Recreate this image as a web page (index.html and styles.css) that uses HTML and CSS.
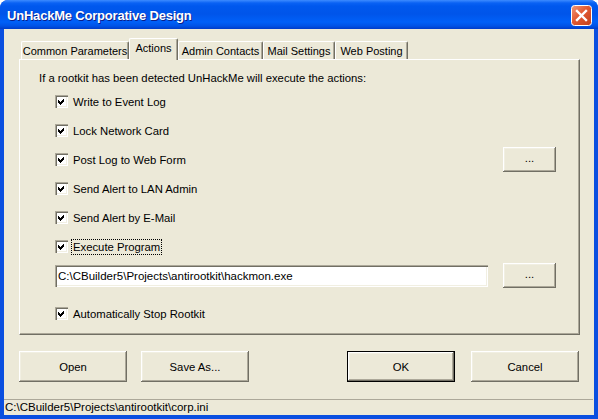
FILE: index.html
```html
<!DOCTYPE html>
<html>
<head>
<meta charset="utf-8">
<link rel="stylesheet" href="styles.css">
</head>
<body>
<div class="window">
  <div class="titlebar">
    <span class="title">UnHackMe Corporative Design</span>
    <span class="close">
      <svg width="21" height="21" viewBox="0 0 21 21">
        <defs>
          <linearGradient id="cg" x1="0" y1="0" x2="1" y2="1">
            <stop offset="0" stop-color="#F09A7C"/>
            <stop offset="0.45" stop-color="#E25A32"/>
            <stop offset="1" stop-color="#C1401C"/>
          </linearGradient>
        </defs>
        <rect x="0.5" y="0.5" width="20" height="20" rx="3" fill="url(#cg)" stroke="#ffffff"/>
        <path d="M6 6 L15 15 M15 6 L6 15" stroke="#ffffff" stroke-width="2.4" stroke-linecap="square"/>
      </svg>
    </span>
  </div>
  <div class="client">
    <div class="content">
      <div class="tabs">
        <div class="tab w1">Common Parameters</div>
        <div class="tab active">Actions</div>
        <div class="tab w3">Admin Contacts</div>
        <div class="tab w4">Mail Settings</div>
        <div class="tab w5">Web Posting</div>
      </div>
      <div class="panel">
        <div class="desc">If a rootkit has been detected UnHackMe will execute the actions:</div>
        <div class="rows">
          <div class="row"><span class="cb"><svg width="13" height="13" viewBox="0 0 13 13"><path d="M3 5 L5 7 L9 3 L9 6 L5 10 L3 8 Z" fill="#000"/></svg></span><span class="lbl">Write to Event Log</span></div>
          <div class="row"><span class="cb"><svg width="13" height="13" viewBox="0 0 13 13"><path d="M3 5 L5 7 L9 3 L9 6 L5 10 L3 8 Z" fill="#000"/></svg></span><span class="lbl">Lock Network Card</span></div>
          <div class="row"><span class="cb"><svg width="13" height="13" viewBox="0 0 13 13"><path d="M3 5 L5 7 L9 3 L9 6 L5 10 L3 8 Z" fill="#000"/></svg></span><span class="lbl">Post Log to Web Form</span><span class="btn dots">...</span></div>
          <div class="row"><span class="cb"><svg width="13" height="13" viewBox="0 0 13 13"><path d="M3 5 L5 7 L9 3 L9 6 L5 10 L3 8 Z" fill="#000"/></svg></span><span class="lbl">Send Alert to LAN Admin</span></div>
          <div class="row"><span class="cb"><svg width="13" height="13" viewBox="0 0 13 13"><path d="M3 5 L5 7 L9 3 L9 6 L5 10 L3 8 Z" fill="#000"/></svg></span><span class="lbl">Send Alert by E-Mail</span></div>
          <div class="row"><span class="cb"><svg width="13" height="13" viewBox="0 0 13 13"><path d="M3 5 L5 7 L9 3 L9 6 L5 10 L3 8 Z" fill="#000"/></svg></span><span class="lbl focus">Execute Program</span></div>
          <div class="inrow"><span class="input">C:\CBuilder5\Projects\antirootkit\hackmon.exe</span><span class="btn dots">...</span></div>
          <div class="row auto"><span class="cb"><svg width="13" height="13" viewBox="0 0 13 13"><path d="M3 5 L5 7 L9 3 L9 6 L5 10 L3 8 Z" fill="#000"/></svg></span><span class="lbl">Automatically Stop Rootkit</span></div>
        </div>
      </div>
      <div class="buttons">
        <span class="btn big">Open</span>
        <span class="btn big save">Save As...</span>
        <span class="btn big ok">OK</span>
        <span class="btn big cancel">Cancel</span>
      </div>
    </div>
    <div class="status">C:\CBuilder5\Projects\antirootkit\corp.ini</div>
  </div>
</div>
</body>
</html>
```
FILE: styles.css
```css
html, body {
  margin: 0;
  padding: 0;
}
body {
  width: 598px;
  height: 419px;
  overflow: hidden;
  font-family: "Liberation Sans", Arial, sans-serif;
  font-size: 11px;
  color: #000;
}
.window {
  width: 598px;
  height: 419px;
  box-sizing: border-box;
  display: flex;
  flex-direction: column;
  background: #0A4FE0;
  border-radius: 8px 8px 0 0;
  overflow: hidden;
}
.titlebar {
  height: 29px;
  flex: none;
  display: flex;
  align-items: center;
  justify-content: space-between;
  padding: 0 7px 0 7px;
  box-sizing: border-box;
  background: linear-gradient(to bottom, #3D8BFF 0px, #0A62F4 3px, #0058EE 6px, #0055EA 14px, #0060F8 22px, #0052E6 26px, #003CC8 29px);
}
.title {
  color: #fff;
  font-weight: bold;
  font-size: 13px;
  letter-spacing: -0.2px;
  text-shadow: 1px 1px 0 #0A1E8A;
  padding-top: 1px;
  white-space: nowrap;
}
.close {
  display: flex;
  flex: none;
  width: 21px;
  height: 21px;
  margin-top: 2px;
  margin-right: -1px;
}
.client {
  flex: 1;
  margin: 0 4px 4px 4px;
  background: #ECE9D8;
  display: flex;
  flex-direction: column;
}
.content {
  padding: 0 15px;
  display: flex;
  flex-direction: column;
}
.tabs {
  height: 30px;
  display: flex;
  align-items: flex-end;
  padding-left: 2px;
}
.tab {
  height: 18px;
  flex: none;
  box-sizing: border-box;
  border-top: 1px solid #fff;
  border-left: 1px solid #fff;
  border-right: 1px solid #716F64;
  box-shadow: inset -1px 0 #ACA899;
  border-radius: 2px 2px 0 0;
  display: flex;
  align-items: center;
  justify-content: center;
  padding-top: 1px;
  background: #ECE9D8;
  font-size: 11px;
  white-space: nowrap;
}
.w1 { width: 108px; }
.w3 { width: 85px; }
.w4 { width: 72px; }
.w5 { width: 73px; }
.tab.active {
  width: 49px;
  height: 22px;
  margin: 0 0 -1px 0;
  padding-bottom: 5px;
  position: relative;
  z-index: 1;
}
.panel {
  width: 561px;
  height: 276px;
  box-sizing: border-box;
  border-top: 1px solid #fff;
  border-left: 1px solid #fff;
  border-right: 1px solid #716F64;
  border-bottom: 1px solid #716F64;
  box-shadow: inset -1px -1px #ACA899;
  padding: 11px 23px 0 19px;
}
.desc {
  height: 14px;
  line-height: 14px;
  font-size: 11.3px;
  white-space: nowrap;
}
.rows {
  margin-top: 2px;
  margin-left: 16px;
}
.row {
  height: 29px;
  display: flex;
  align-items: center;
}
.cb {
  width: 13px;
  height: 13px;
  box-sizing: border-box;
  background: #fff;
  display: flex;
  box-shadow: inset 1px 1px #ACA899, inset 2px 2px #716F64, inset -1px -1px #fff, inset -2px -2px #F1EFE2;
  margin-right: 5px;
  flex: none;
}
.cb svg {
  shape-rendering: crispEdges;
}
.lbl {
  line-height: 14px;
  padding: 0 1px;
  border: 1px dotted transparent;
  margin-left: -2px;
  font-size: 11.3px;
  white-space: nowrap;
}
.lbl.focus {
  border-color: #000;
}
.btn {
  display: flex;
  align-items: center;
  justify-content: center;
  background: #ECE9D8;
  box-sizing: border-box;
  box-shadow: inset -1px -1px #716F64, inset 1px 1px #fff, inset -2px -2px #ACA899, inset 2px 2px #F1EFE2;
  font-size: 11.3px;
  flex: none;
}
.dots {
  width: 53px;
  height: 25px;
  margin-left: auto;
  padding-bottom: 3px;
}
.inrow {
  display: flex;
  align-items: center;
  height: 25px;
  margin-top: 2px;
}
.input {
  width: 433px;
  height: 22px;
  flex: none;
  box-sizing: border-box;
  background: #fff;
  box-shadow: inset 1px 1px #ACA899, inset 2px 2px #716F64, inset -1px -1px #fff, inset -2px -2px #F1EFE2;
  display: flex;
  align-items: center;
  padding-left: 3px;
  font-size: 11.5px;
}
.row.auto {
  margin-top: 11px;
}
.buttons {
  margin-top: 16px;
  height: 31px;
  display: flex;
}
.big {
  width: 108px;
  height: 31px;
}
.save {
  margin-left: 14px;
}
.ok {
  margin-left: auto;
  border: 1px solid #000;
}
.cancel {
  margin-left: 16px;
}
.status {
  margin-top: 17px;
  height: 16px;
  box-sizing: border-box;
  border-top: 1px solid #ACA899;
  padding-left: 1px;
  line-height: 15px;
  font-size: 11.5px;
  margin-right: 1px;
  white-space: nowrap;
}
```
